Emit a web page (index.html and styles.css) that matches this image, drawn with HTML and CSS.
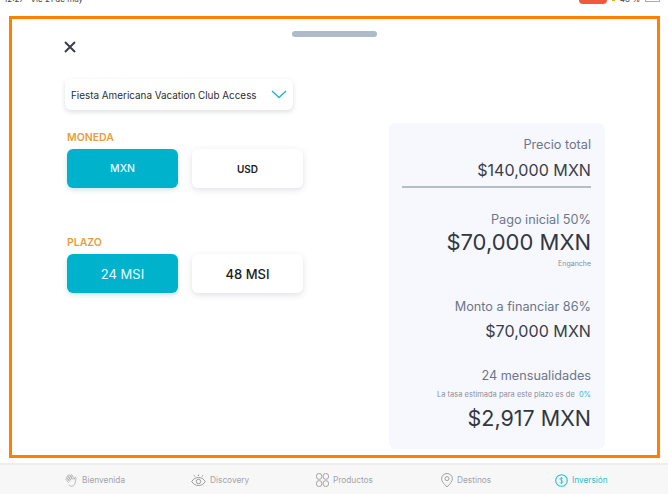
FILE: index.html
```html
<!DOCTYPE html>
<html lang="es">
<head>
  <meta charset="UTF-8">
  <title>Inversión</title>
  <link rel="stylesheet" href="styles.css">
</head>
<body>
  <div class="status">
    <span class="status-time">12:27 &nbsp; Vie 21 de may</span>
    <span class="status-right">
      <span class="status-pill"></span>
      <span class="status-dot"></span>
      <span class="status-text">48 %</span>
      <span class="status-batt"></span>
    </span>
  </div>

  <div class="frame">
    <div class="handle"></div>
    <div class="columns">
      <div class="left">
        <svg class="close" width="12" height="12" viewBox="0 0 12 12"><path d="M1 1l10 10M11 1L1 11" fill="none" stroke="#3a3f47" stroke-width="2"/></svg>
        <div class="select">
          <span>Fiesta Americana Vacation Club Access</span>
          <svg width="16" height="9" viewBox="0 0 16 9"><path d="M1 1l7 6.500L15 1" fill="none" stroke="#1fb5cf" stroke-width="1.400"/></svg>
        </div>
        <div class="label label-moneda">MONEDA</div>
        <div class="options">
          <div class="opt small on">MXN</div>
          <div class="opt small">USD</div>
        </div>
        <div class="label label-plazo">PLAZO</div>
        <div class="options">
          <div class="opt on">24 MSI</div>
          <div class="opt">48 MSI</div>
        </div>
      </div>

      <div class="panel">
        <div class="row-title">Precio total</div>
        <div class="amount-md first">$140,000 MXN</div>
        <hr class="line">
        <div class="row-title pago">Pago inicial 50%</div>
        <div class="amount-lg">$70,000 MXN</div>
        <div class="note">Enganche</div>
        <div class="row-title monto">Monto a financiar 86%</div>
        <div class="amount-md second">$70,000 MXN</div>
        <div class="row-title mens">24 mensualidades</div>
        <div class="note tasa">La tasa estimada para este plazo es de <b>0%</b></div>
        <div class="amount-xl">$2,917 MXN</div>
      </div>
    </div>
  </div>

  <div class="tabs">
    <div class="tab">
      <svg width="13" height="14" viewBox="0 0 13 14" fill="none" stroke="#a9a9ab" stroke-width=".8"><path d="M3.800 9.800L1 6.600c-.7-.8.4-1.700 1.100-1L4.600 8.200 1.900 4.400c-.6-.8.5-1.600 1.100-.9l2.700 3.700L3.400 2.800c-.5-.8.6-1.500 1.200-.8l2.600 4.300-1.400-3.800c-.3-.9.9-1.300 1.300-.5l2 4.300.6-1.500c.4-.9 1.600-.5 1.400.4l-.6 3c-.3 2.800-1.600 4.900-3.600 5.100-1.300.1-2.400-.8-3.100-1.700"/></svg>
      <span>Bienvenida</span>
    </div>
    <div class="tab">
      <svg width="15" height="13" viewBox="0 0 15 13" fill="none" stroke="#8f8f92" stroke-width=".9"><path d="M.7 7.500C2.500 4.700 4.800 3.500 7.500 3.500s5 1.200 6.800 4c-1.800 2.800-4.100 4-6.800 4s-5-1.200-6.800-4z"/><circle cx="7.500" cy="7.500" r="2.200"/><path d="M7.500 .5v1.500M3 1.200l.9 1.400M12 1.200l-.9 1.400"/></svg>
      <span>Discovery</span>
    </div>
    <div class="tab">
      <svg width="13" height="14" viewBox="0 0 13 14" fill="none" stroke="#9a9a9d" stroke-width=".9"><rect x=".5" y=".5" width="5.300" height="5.800" rx="2.400"/><rect x="7.200" y=".5" width="5.300" height="5.800" rx="2.400"/><rect x=".5" y="7.700" width="5.300" height="5.800" rx="2.400"/><rect x="7.200" y="7.700" width="5.300" height="5.800" rx="2.400"/></svg>
      <span>Productos</span>
    </div>
    <div class="tab">
      <svg width="12" height="15" viewBox="0 0 12 15" fill="none" stroke="#9a9a9d" stroke-width=".9"><path d="M6 14C2.500 10.500.6 8.200.6 5.700a5.400 5.200 0 0 1 10.800 0C11.400 8.200 9.500 10.500 6 14z"/><circle cx="6" cy="5.600" r="2"/></svg>
      <span>Destinos</span>
    </div>
    <div class="tab active">
      <svg width="13" height="13" viewBox="0 0 13 13" fill="none" stroke="#2bbcd2"><circle cx="6.500" cy="6.500" r="5.800" stroke-width="1.100"/><path d="M8 4.800c-.4-.6-1-.9-1.600-.9-.8 0-1.500.5-1.500 1.200 0 1.600 3.200.9 3.200 2.700 0 .8-.7 1.300-1.600 1.300-.7 0-1.300-.3-1.700-.9M6.500 3v7" stroke-width=".8"/></svg>
      <span>Inversión</span>
    </div>
  </div>
</body>
</html>
```

FILE: styles.css
```css
* { box-sizing: border-box; }
html, body { margin: 0; height: 494px; overflow: hidden; }
body { background: #fff; font-family: Inter, "Liberation Sans", sans-serif; color: #2f343c; }

.status { height: 16px; overflow: hidden; display: flex; justify-content: space-between; padding: 0 8px 0 4px; font-size: 8px; color: #444; }
.status-time { margin-top: -6px; }
.status-right { display: flex; align-items: flex-start; gap: 5px; }
.status-pill { width: 28px; height: 4px; background: #ee5a3a; border-radius: 0 0 8px 8px; }
.status-dot { width: 3px; height: 1px; background: #f5a623; }
.status-text { margin-top: -6px; }
.status-batt { width: 15px; height: 2px; border: 1px solid #aaa; border-top: 0; }

.frame { margin-left: 9px; width: 651px; height: 442px; border: 3px solid #ff8000; padding-top: 12px; }
.handle { width: 85px; height: 6px; margin: 0 auto; background: #aebbc9; border-radius: 3px; }
.columns { display: flex; }
.left { width: 377px; padding: 4px 0 0 53px; }
.close { display: block; margin-bottom: 26px; margin-left: -1px; }

.select { width: 228px; height: 31px; background: #fff; border-radius: 6px; box-shadow: 0 2px 5px rgba(60,70,90,.18); display: flex; align-items: center; justify-content: space-between; padding: 0 6px; font-size: 9.900px; color: #2a2d33; }

.label { color: #e5a03c; font-size: 10.500px; font-weight: 600; margin-left: 2px; line-height: 12px; }
.label-moneda { margin-top: 22px; margin-bottom: 5px; }
.label-plazo { margin-top: 49px; margin-bottom: 5px; }

.options { display: flex; gap: 14px; margin-left: 2px; }
.opt { width: 111px; height: 39px; border-radius: 6px; background: #fff; box-shadow: 0 2px 6px rgba(60,70,90,.16); display: flex; align-items: center; justify-content: center; font-size: 13px; font-weight: 500; color: #1c1c20; }
.opt.small { font-size: 10px; font-weight: 600; }
.opt.on { background: #00b2cc; color: #e8fbff; font-weight: 400; box-shadow: 0 2px 5px rgba(0,130,160,.2); }
.opt.small.on { font-size: 10.500px; font-weight: 500; }

.panel { width: 216px; height: 326px; margin-top: 86px; background: #f7f8fe; border-radius: 6px; padding: 14px 14px 0 13px; text-align: right; }
.row-title { font-size: 12.700px; line-height: 16px; color: #6b7789; }
.amount-md { font-size: 16.100px; line-height: 22px; color: #3a3f47; }
.amount-lg { font-size: 22px; line-height: 28px; color: #33373f; }
.amount-xl { font-size: 21.500px; line-height: 28px; color: #33373f; }
.first { margin-top: 6px; }
.line { height: 2px; margin: 5px 0 0; border: 0; background: #b3bfc7; }
.pago { margin-top: 24px; }
.amount-lg { margin-top: 0; }
.note { font-size: 7px; line-height: 9px; color: #8a8f99; margin-top: 3px; }
.monto { margin-top: 31px; }
.second { margin-top: 5px; }
.mens { margin-top: 26px; }
.tasa { margin-top: 6px; font-size: 7.500px; }
.tasa b { color: #2bbcd2; font-weight: 400; margin-left: 2px; }
.amount-xl { margin-top: 5px; }

.tabs { margin-top: 5px; height: 32px; border-top: 2px solid #eeeeee; background: #f8f7f8; display: grid; grid-template-columns: 126px 125px 125px 114px auto; align-items: center; padding-left: 65px; }
.tab { display: flex; align-items: center; gap: 4px; font-size: 8.300px; color: #a3a3a6; }
.tab.active { color: #2bbcd2; }
```
